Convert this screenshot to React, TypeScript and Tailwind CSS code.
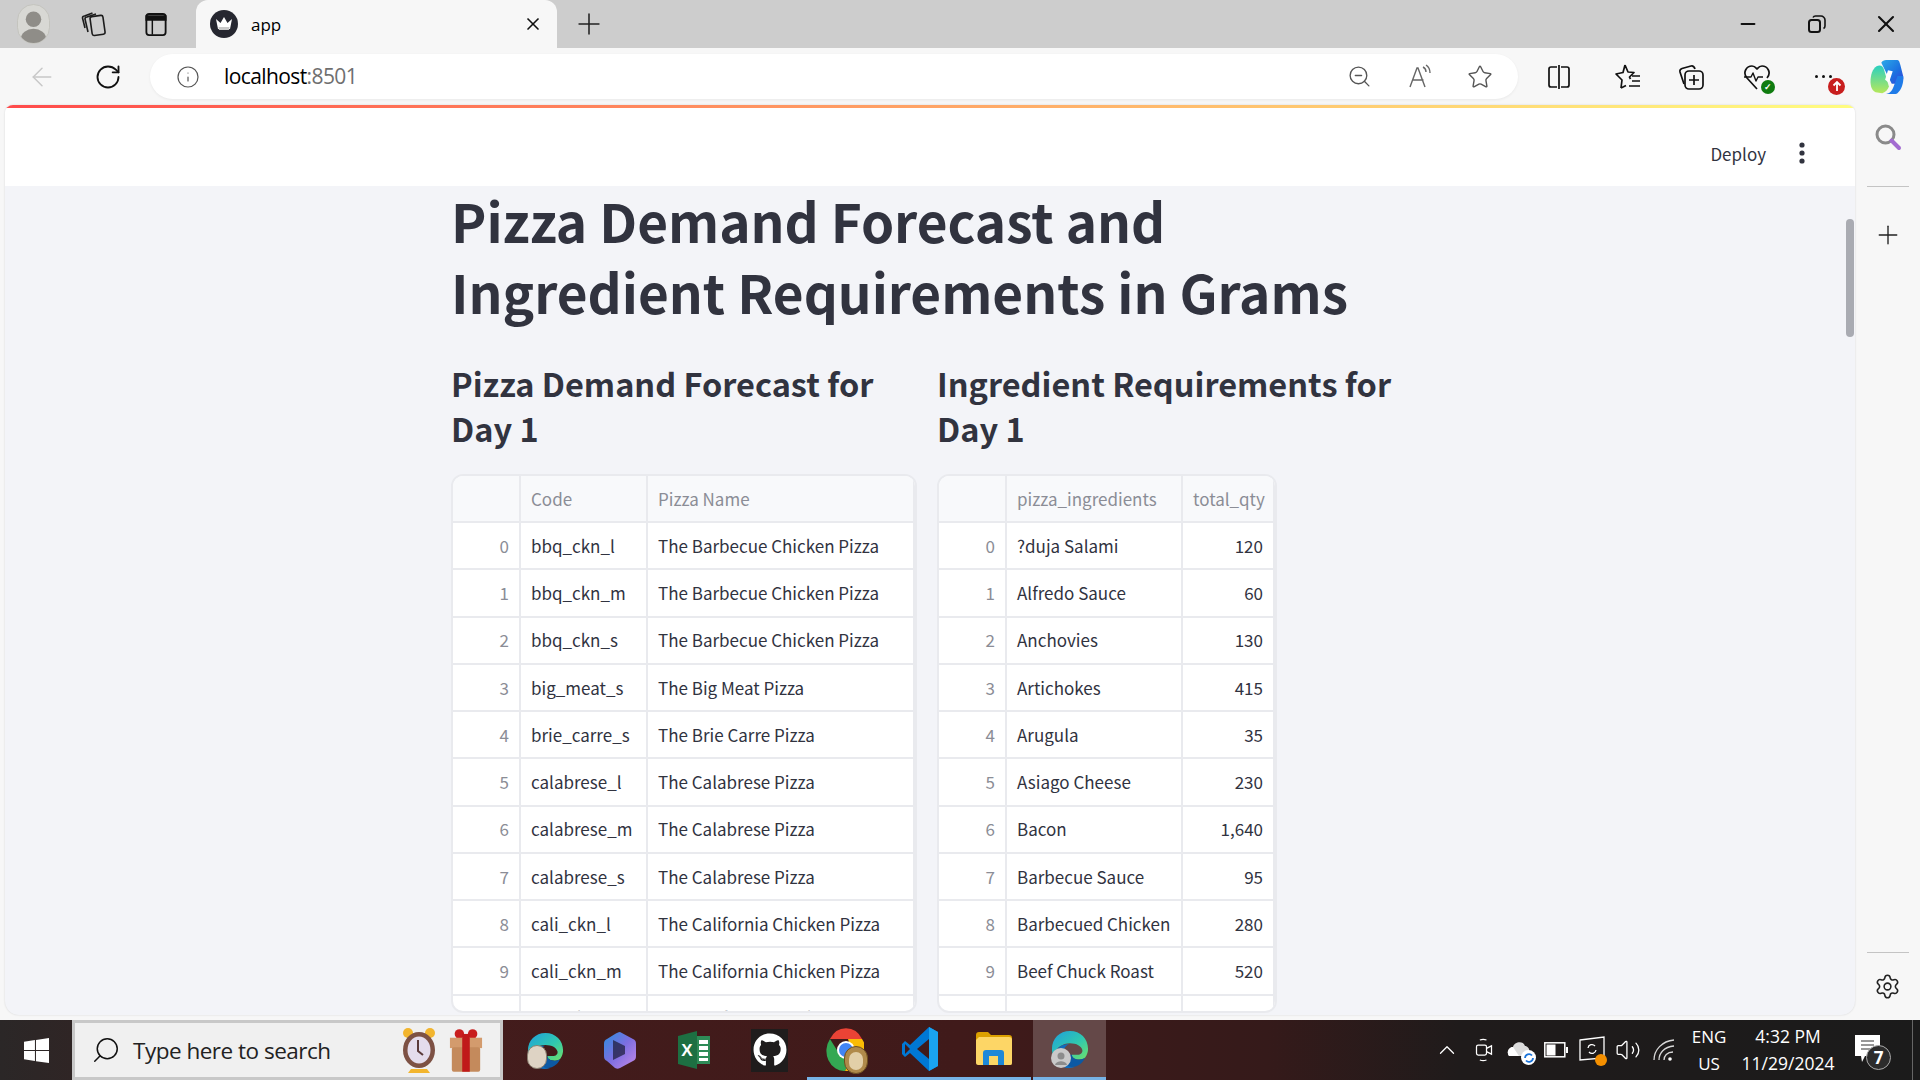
import React from "react";
import { ArrowLeft, RotateCw, Info, ZoomOut, Star, Plus, X, Minus, Settings, Search, ChevronUp, Volume2 } from "lucide-react";
import { FaGithub } from "react-icons/fa";

const codeRows = [
  ["bbq_ckn_l", "The Barbecue Chicken Pizza"],
  ["bbq_ckn_m", "The Barbecue Chicken Pizza"],
  ["bbq_ckn_s", "The Barbecue Chicken Pizza"],
  ["big_meat_s", "The Big Meat Pizza"],
  ["brie_carre_s", "The Brie Carre Pizza"],
  ["calabrese_l", "The Calabrese Pizza"],
  ["calabrese_m", "The Calabrese Pizza"],
  ["calabrese_s", "The Calabrese Pizza"],
  ["cali_ckn_l", "The California Chicken Pizza"],
  ["cali_ckn_m", "The California Chicken Pizza"],
  ["cali_ckn_s", "The California Chicken Pizza"],
];
const ingRows = [
  ["?duja Salami", "120"],
  ["Alfredo Sauce", "60"],
  ["Anchovies", "130"],
  ["Artichokes", "415"],
  ["Arugula", "35"],
  ["Asiago Cheese", "230"],
  ["Bacon", "1,640"],
  ["Barbecue Sauce", "95"],
  ["Barbecued Chicken", "280"],
  ["Beef Chuck Roast", "520"],
  ["Blue Cheese", "90"],
];

function Table({ cols, heads, rows, width, alignLast }: { cols: number[]; heads: string[]; rows: string[][]; width: string; alignLast?: boolean }) {
  const cell = "border-r-2 border-b-2 border-[#e9eaee] px-[10px] flex items-center overflow-hidden whitespace-nowrap shrink-0";
  return (
    <div className={`${width} h-[539px] overflow-hidden rounded-[12px] border-2 border-[#e9eaee] bg-white text-[17px] text-[#31333f]`}>
      <div className="flex h-[47px] bg-[#f8f9fb] text-[#8b8d96]">
        <div className={cell} style={{ width: cols[0] }} />
        <div className={cell} style={{ width: cols[1] }}>{heads[0]}</div>
        <div className={`${cell} border-r-0`} style={{ width: cols[2] }}>{heads[1]}</div>
      </div>
      {rows.map((r, i) => (
        <div key={i} className="flex h-[47.25px]">
          <div className={`${cell} justify-end text-[#8b8d96]`} style={{ width: cols[0] }}>{i}</div>
          <div className={cell} style={{ width: cols[1] }}>{r[0]}</div>
          <div className={`${cell} border-r-0 ${alignLast ? "justify-end" : ""}`} style={{ width: cols[2] }}>{r[1]}</div>
        </div>
      ))}
    </div>
  );
}

function Slot({ w, children, className = "" }: { w: string; children?: React.ReactNode; className?: string }) {
  return <div className={`${w} h-full flex items-center justify-center shrink-0 ${className}`}>{children}</div>;
}

function Edge({ id, size = 40, badge }: { id: string; size?: number; badge?: "photo" | "gray" }) {
  return (
    <div className="relative" style={{ width: size, height: size }}>
      <svg viewBox="0 0 40 40" width={size} height={size}>
        <defs>
          <linearGradient id={id} x1="0" y1="0" x2="1" y2="1">
            <stop offset="0" stopColor="#1f9fdc" />
            <stop offset="0.55" stopColor="#2fc8b0" />
            <stop offset="1" stopColor="#6fe06a" />
          </linearGradient>
        </defs>
        <path d="M20 1C9 1 1 9 1 20c0 3 .5 5 1.500 7C5 19 12 14 20 14c7 0 12 3 13 7 .5 3-2 5-5 5h-6c0 3 3 5 8 5 3 0 5-1 6-2 2-3 3-6 3-9C39 9 31 1 20 1Z" fill={`url(#${id})`} />
        <path d="M2.500 27C5 19 12 14 19 15c-5 2-7 7-6 12 1 5 5 10 12 12-2 .7-4 1-6 1-7 0-14-5-16.500-13Z" fill="#0f6cbd" />
        <path d="M22 26c0 3 3 5 8 5 3 0 5-1 6-2-3 7-9 10-14 10-4 0-7-3-8-6-1-3-1-6 0-8 1 1 3 1 8 1Z" fill="#0c59a4" />
      </svg>
      {badge === "photo" && (
        <div className="absolute left-0 bottom-0 w-[20px] h-[24px] rounded-full bg-[#ded3c4] border border-[#8a7f70]" />
      )}
      {badge === "gray" && (
        <div className="absolute left-0 bottom-0 w-[20px] h-[20px] rounded-full bg-[#c9c9c9] flex items-center justify-center">
          <svg viewBox="0 0 20 20" width="20" height="20"><circle cx="10" cy="8" r="3.5" fill="#8c8c8c" /><path d="M4 17c1-5 11-5 12 0Z" fill="#8c8c8c" /></svg>
        </div>
      )}
    </div>
  );
}

function Copilot({ size = 38 }: { size?: number }) {
  return (
    <svg viewBox="0 0 40 40" width={size} height={size}>
      <defs>
        <linearGradient id="cp1" x1="0" y1="0" x2="1" y2="1">
          <stop offset="0" stopColor="#2aa9e8" />
          <stop offset="0.6" stopColor="#1c6fe0" />
          <stop offset="1" stopColor="#3a3fd8" />
        </linearGradient>
        <linearGradient id="cp2" x1="0" y1="0" x2="0" y2="1">
          <stop offset="0" stopColor="#2ad0c0" />
          <stop offset="1" stopColor="#b7e85a" />
        </linearGradient>
      </defs>
      <path d="M14 5c1-2 3-3 5-3h11c3 0 3 2 4 5l3 12c1 5-2 8-6 8h-6L14 5Z" fill="url(#cp1)" />
      <path d="M3 20C4 13 8 8 12 8c3 0 4 2 5 5l5 17c-1 3-3 6-7 7l-7-1C3 34 2 27 3 20Z" fill="url(#cp2)" />
      <path d="M17 38c6 0 8-3 10-8l4-11h6c1 7-2 15-6 18-1 1-3 1-4 1H17Z" fill="#1f7be8" />
      <path d="M21 13l5 1-4 12-4-3 3-10Z" fill="#ffffff" />
    </svg>
  );
}

export default function App() {
  return (
    <div className="w-[1920px] h-[1080px] overflow-hidden flex flex-col bg-[#f7f7f7] text-black font-['Open_Sans',sans-serif]">
      {/* tab strip */}
      <div className="h-[48px] flex shrink-0 bg-[#cdcdcd] items-center">
        <Slot w="w-[66px]">
          <div className="w-[33px] h-[40px] rounded-full bg-[#d8d8d4] border border-[#c4c4be] flex items-center justify-center overflow-hidden">
            <svg viewBox="0 0 32 40" width="32" height="40"><circle cx="16" cy="15" r="8" fill="#8f8d88" /><ellipse cx="16" cy="35" rx="13" ry="10" fill="#8f8d88" /></svg>
          </div>
        </Slot>
        <Slot w="w-[55px]">
          <svg viewBox="0 0 26 28" width="26" height="28" fill="none" stroke="#1c1c1c" strokeWidth="1.6" strokeLinejoin="round">
            <rect x="10" y="6" width="13" height="19" rx="2" transform="rotate(-8 16 15)" />
            <path d="M7 22 4 9c0-1 .5-2 2-2l9-3M4 18 1.500 8c0-1 .5-2 2-2l8-3" />
          </svg>
        </Slot>
        <Slot w="w-[70px]" className="mr-[5px]">
          <svg viewBox="0 0 24 26" width="22" height="25" fill="none" stroke="#111" strokeWidth="2">
            <rect x="1.500" y="1.500" width="21" height="23" rx="3" />
            <path d="M1.500 4h21v4h-21z" fill="#111" />
            <path d="M8 8v16" strokeWidth="1.6" />
          </svg>
        </Slot>
        <div className="w-[361px] h-full shrink-0 bg-[#f7f7f7] rounded-t-[12px] flex items-center pl-[14px] pr-[14px]">
          <div className="w-[28px] h-[28px] rounded-full bg-[#262730] flex items-center justify-center">
            <svg viewBox="0 0 20 16" width="20" height="16"><path d="M2 3l4.500 4L10 1l3.500 6L18 3l-2 10H4Z" fill="#fff" /><path d="M4.500 11h11l-.6 3H5Z" fill="#c8c8c8" /></svg>
          </div>
          <span className="ml-[13px] text-[17px] leading-none text-black">app</span>
          <X className="ml-auto" size={20} strokeWidth={2} color="#111" />
        </div>
        <Slot w="w-[64px]"><Plus size={34} strokeWidth={1.1} color="#222" /></Slot>
        <div className="flex-1" />
        <Slot w="w-[69px]"><Minus size={22} strokeWidth={2.2} color="#111" /></Slot>
        <Slot w="w-[70px]">
          <svg viewBox="0 0 20 20" width="20" height="20" fill="none" stroke="#111" strokeWidth="2"><rect x="2" y="6" width="11" height="12" rx="2.500" /><path d="M6 3.500c.5-1 1.500-1.500 2.500-1.500H14c2 0 4 2 4 4v6c0 1-.5 2-1.500 2.500" strokeWidth="1.600" /></svg>
        </Slot>
        <Slot w="w-[68px]"><X size={28} strokeWidth={1.8} color="#111" /></Slot>
      </div>

      {/* toolbar */}
      <div className="h-[57px] shrink-0 flex items-center">
        <Slot w="w-[84px]"><ArrowLeft size={30} strokeWidth={1.2} color="#c8c8c8" /></Slot>
        <Slot w="w-[48px]"><RotateCw size={28} strokeWidth={1.6} color="#111" /></Slot>
        <div className="ml-[18px] w-[1368px] h-[45px] shrink-0 bg-white rounded-full flex items-center shadow-[0_1px_3px_rgba(0,0,0,0.06)]">
          <Info className="ml-[26px]" size={24} strokeWidth={1.2} color="#555" />
          <span className="ml-[24px] text-[21px] leading-none tracking-[-0.6px] text-black">localhost<span className="text-[#6f6f6f]">:8501</span></span>
          <div className="flex-1" />
          <Slot w="w-[62px]"><ZoomOut size={25} strokeWidth={1.3} color="#555" /></Slot>
          <Slot w="w-[60px]">
            <svg viewBox="0 0 26 26" width="26" height="26" fill="none" stroke="#666" strokeWidth="1.400"><path d="M3 23 10 4h1l7 19M5.500 16h11" /><path d="M16 3c2 1 3 3 3 5M19 1c3 2 4 4 4 8" /></svg>
          </Slot>
          <Slot w="w-[60px]"><Star size={26} strokeWidth={1.3} color="#555" /></Slot>
          <div className="w-[8px]" />
        </div>
        <Slot w="w-[74px]" className="ml-[4px]">
          <svg viewBox="0 0 26 26" width="26" height="26" fill="none" stroke="#111" strokeWidth="1.700"><path d="M11 3H5a2 2 0 0 0-2 2v16a2 2 0 0 0 2 2h6M15 3h6a2 2 0 0 1 2 2v16a2 2 0 0 1-2 2h-6M13 1v24" /></svg>
        </Slot>
        <Slot w="w-[62px]">
          <svg viewBox="0 0 28 28" width="28" height="28" fill="none" stroke="#111" strokeWidth="1.700" strokeLinejoin="round"><path d="M12 2l3 7 6 .5-4.500 4.500 1 2M8 25l1-8-6-6 7-1.500L12 2M8 25l5-2.500" /><path d="M19 13h8M19 18h8M16 23h11" /></svg>
        </Slot>
        <Slot w="w-[66px]">
          <svg viewBox="0 0 28 28" width="28" height="28" fill="none" stroke="#111" strokeWidth="1.700"><rect x="8" y="8" width="18" height="18" rx="4" /><path d="M17 12v10M12 17h10" /><path d="M7 21 3 9c-.5-2 .5-3 2-3.500L14 3c2-.5 3 0 4 3" /></svg>
        </Slot>
        <Slot w="w-[66px]">
          <div className="relative w-[28px] h-[28px]">
            <svg viewBox="0 0 28 28" width="28" height="28" fill="none" stroke="#111" strokeWidth="1.700" strokeLinejoin="round"><path d="M14 26 4 15c-5-6 0-12 5-12 3 0 4 2 5 3 1-1 2-3 5-3 5 0 10 6 5 12" /><path d="M1 14h7l2-4 3 8 2-4h5" strokeWidth="1.400" /></svg>
            <div className="absolute right-[-4px] bottom-[-3px] w-[14px] h-[14px] rounded-full bg-[#107c10] flex items-center justify-center text-white text-[9px] leading-none font-bold">✓</div>
          </div>
        </Slot>
        <Slot w="w-[66px]">
          <div className="relative flex items-center justify-center gap-[4px] w-[28px] h-[28px]">
            <span className="w-[3px] h-[3px] rounded-full bg-[#111]" />
            <span className="w-[3px] h-[3px] rounded-full bg-[#111]" />
            <span className="w-[3px] h-[3px] rounded-full bg-[#111]" />
            <div className="absolute right-[-8px] bottom-[-4px] w-[17px] h-[17px] rounded-full bg-[#c81e1e] flex items-center justify-center">
              <svg viewBox="0 0 12 12" width="12" height="12" fill="none" stroke="#fff" strokeWidth="1.800"><path d="M6 11V2M2.500 5.500 6 2l3.500 3.500" /></svg>
            </div>
          </div>
        </Slot>
        <Slot w="w-[60px]" className="pl-[2px]"><Copilot /></Slot>
      </div>

      {/* middle */}
      <div className="h-[915px] shrink-0 flex pl-[5px]">
        <div className="relative w-[1850px] h-[910px] overflow-hidden rounded-b-[14px] rounded-t-[8px] bg-[#f3f4f8] shadow-[0_0_2px_rgba(0,0,0,0.15)] flex flex-col">
          <div className="h-[3px] shrink-0 bg-[linear-gradient(90deg,#ff4b4b,#fffd80)]" />
          <div className="h-[78px] shrink-0 bg-white flex items-center justify-end pr-[50px] pt-[12px] text-[#31333f] font-['Noto_Sans_CJK_SC',sans-serif]">
            <span className="text-[17px] leading-none">Deploy</span>
            <svg className="ml-[33px]" viewBox="0 0 6 24" width="6" height="24" fill="#31333f"><circle cx="3" cy="4" r="2.600" /><circle cx="3" cy="12" r="2.600" /><circle cx="3" cy="20" r="2.600" /></svg>
          </div>
          <div className="flex-1 overflow-hidden pl-[446px] text-[#31333f] font-['Noto_Sans_CJK_SC',sans-serif]">
            <h1 className="-mt-[2px] h-[142px] text-[53.1px] leading-[71px] font-bold text-[#31333f]">Pizza Demand Forecast and<br />Ingredient Requirements in Grams</h1>
            <div className="flex gap-[22px] mt-[34px]">
              <div className="w-[464px] shrink-0">
                <h2 className="h-[92px] text-[32.5px] leading-[45px] font-semibold">Pizza Demand Forecast for Day 1</h2>
                <div className="mt-[22px]">
                  <Table width="w-[466px]" cols={[68, 127, 267]} heads={["Code", "Pizza Name"]} rows={codeRows} />
                </div>
              </div>
              <div className="w-[464px] shrink-0">
                <h2 className="h-[92px] text-[32.5px] leading-[45px] font-semibold">Ingredient Requirements for Day 1</h2>
                <div className="mt-[22px]">
                  <Table width="w-[340px]" cols={[68, 176, 92]} heads={["pizza_ingredients", "total_qty"]} rows={ingRows} alignLast />
                </div>
              </div>
            </div>
          </div>
          <div className="absolute right-[1px] top-[114px] w-[8px] h-[118px] rounded-full bg-[#a9abb2]" />
        </div>
        <div className="flex-1 flex flex-col items-center">
          <Slot w="w-full" className="!h-[64px]">
            <svg viewBox="0 0 28 28" width="28" height="28" fill="none"><circle cx="11.500" cy="11.500" r="8.500" stroke="#8a8a8a" strokeWidth="3" /><path d="M17.500 17.500 25 25" stroke="#a36bd1" strokeWidth="4" strokeLinecap="round" /></svg>
          </Slot>
          <div className="w-[42px] h-[1px] bg-[#c4c4c4] mt-[17px]" />
          <Slot w="w-full" className="!h-[95px]"><Plus size={30} strokeWidth={1.1} color="#222" /></Slot>
          <div className="flex-1" />
          <div className="w-[42px] h-[1px] bg-[#c4c4c4]" />
          <Slot w="w-full" className="!h-[67px]"><Settings size={27} strokeWidth={1.4} color="#222" /></Slot>
        </div>
      </div>

      {/* taskbar */}
      <div className="h-[60px] shrink-0 flex items-center bg-[linear-gradient(90deg,#2b2727_0%,#431c1c_22%,#401a1a_50%,#351a1a_66%,#1f1b1b_76%,#1b1b1b_100%)] text-white">
        <Slot w="w-[72px]">
          <svg viewBox="0 0 24 24" width="25" height="25" fill="#fff"><path d="M0 3.500 10.500 2v9.500H0ZM11.500 1.800 24 0v11.500H11.500ZM0 12.500h10.500V22L0 20.500ZM11.500 12.500H24V24l-12.500-1.800Z" /></svg>
        </Slot>
        <div className="w-[431px] h-full shrink-0 bg-[#f0f0f0] border-[3px] border-[#c8c8c8] flex items-center text-[#1a1a1a]">
          <Search className="ml-[16px] -scale-x-100" size={30} strokeWidth={1.2} color="#111" />
          <span className="ml-[12px] mt-[3px] text-[22.5px] leading-none tracking-[-0.5px] text-[#222]">Type here to search</span>
          <div className="flex-1" />
          <svg viewBox="0 0 36 46" width="36" height="46">
            <circle cx="7" cy="6" r="5" fill="#f2b52e" /><circle cx="29" cy="6" r="5" fill="#f2b52e" />
            <path d="M10 42h16l3 4H7Z" fill="#f2b52e" />
            <ellipse cx="18" cy="23" rx="16" ry="18" fill="#7d5144" />
            <ellipse cx="18" cy="23" rx="11.500" ry="13.500" fill="#e4dcec" />
            <path d="M17 13v11l5 4" stroke="#5a3a3a" strokeWidth="2" fill="none" />
          </svg>
          <svg className="ml-[12px] mr-[17px]" viewBox="0 0 36 46" width="34" height="46">
            <circle cx="11" cy="6" r="5" fill="#c81e1e" /><circle cx="25" cy="6" r="5" fill="#c81e1e" />
            <rect x="1" y="10" width="34" height="11" fill="#d39b6d" />
            <rect x="3" y="20" width="30" height="26" rx="2" fill="#c48a5c" />
            <rect x="14" y="6" width="8" height="40" fill="#c01a1a" />
          </svg>
        </div>
        <Slot w="w-[78px]" className="ml-[3px]"><Edge id="eg1" size={37} badge="photo" /></Slot>
        <Slot w="w-[72px]">
          <svg viewBox="0 0 32 38" width="32" height="38">
            <defs><linearGradient id="m365" x1="0" y1="0" x2="1" y2="1"><stop offset="0" stopColor="#2a8fe0" /><stop offset="0.5" stopColor="#7d6ee0" /><stop offset="1" stopColor="#c58ae8" /></linearGradient></defs>
            <path d="M16 1 29 8c2 1 3 2 3 5v12c0 3-1 4-3 5l-13 7c-2 1-3 1-5 0L3 30c-2-1-3-2-3-5V13c0-3 1-4 3-5l8-5c2-1 3-2 5-2Z" fill="url(#m365)" />
            <path d="M9 9l12 6 0 8-12 6Z" fill="#202040" opacity=".75" />
          </svg>
        </Slot>
        <Slot w="w-[76px]">
          <svg viewBox="0 0 32 38" width="32" height="38">
            <path d="M0 5 19 0v38L0 33Z" fill="#1d6f42" /><rect x="19" y="5" width="13" height="28" fill="#2e8b57" />
            <path d="M21 9h9v4h-9ZM21 15h9v4h-9ZM21 21h9v4h-9ZM21 27h9v3h-9Z" fill="#fff" />
            <text x="9" y="25" fontSize="17" fill="#fff" fontWeight="700" textAnchor="middle" fontFamily="Liberation Sans, sans-serif">X</text>
          </svg>
        </Slot>
        <Slot w="w-[75px]">
          <div className="w-[37px] h-[43px] bg-[#1f1c1c] flex items-center justify-center"><FaGithub size={34} color="#fff" /></div>
        </Slot>
        <Slot w="w-[75px]" className="border-b-[3px] border-[#76b3e6]">
          <div className="relative w-[38px] h-[44px]">
            <svg viewBox="0 0 38 44" width="38" height="44">
              <path d="M4 12A18 20 0 0 1 36 12H19Z" fill="#ea4335" />
              <path d="M4 12A18 20 0 0 0 19 44l8-16H14Z" fill="#34a853" />
              <path d="M36 12H22l5 16-8 16A18 20 0 0 0 36 12Z" fill="#fbbc05" />
              <circle cx="20" cy="23" r="9" fill="#fff" /><circle cx="20" cy="23" r="7" fill="#4285f4" />
            </svg>
            <div className="absolute right-[-4px] bottom-[-3px] w-[24px] h-[28px] rounded-full bg-[#b08a4a] border border-[#6e4f1f]">
              <div className="mx-auto mt-[5px] w-[14px] h-[18px] rounded-full bg-[#e2cfa8]" />
            </div>
          </div>
        </Slot>
        <Slot w="w-[75px]" className="border-b-[3px] border-[#76b3e6]">
          <svg viewBox="0 0 36 44" width="36" height="44">
            <path d="M27 0 36 5v34l-9 5L8 26l-5 4-3-3V17l3-3 5 4Z" fill="#0078d4" />
            <path d="M27 0 36 5v34l-9 5Z" fill="#1aa3f0" />
            <path d="M27 12 15 22l12 10Z" fill="#3f1a1a" />
            <path d="M3 17l5 5-5 5Z" fill="#3f1a1a" />
          </svg>
        </Slot>
        <Slot w="w-[74px]" className="border-b-[3px] border-[#76b3e6]">
          <svg viewBox="0 0 36 34" width="36" height="34">
            <path d="M0 3c0-2 1-3 3-3h9l3 3h18c2 0 3 1 3 3v4H0Z" fill="#dca000" />
            <path d="M3 5h30c2 0 3 1 3 3v23c0 2-1 2-3 2H2c-1 0-2-1-2-2V8Z" fill="#fdd666" />
            <path d="M7 33V21c0-2 1-3 3-3h15c2 0 3 1 3 3v12h-6v-9h-9v9Z" fill="#1e88d8" />
          </svg>
        </Slot>
        <Slot w="w-[73px]" className="bg-[#644848] ml-[2px] border-b-[3px] border-[#76b3e6]">
          <Edge id="eg2" size={38} badge="gray" />
        </Slot>
        <div className="flex-1" />
        <Slot w="w-[36px]"><ChevronUp size={26} strokeWidth={1.2} color="#fff" /></Slot>
        <Slot w="w-[37px]">
          <svg viewBox="0 0 24 30" width="20" height="28" fill="none" stroke="#fff" strokeWidth="1.500"><rect x="3" y="9" width="12" height="12" rx="2" /><path d="M15 13l6-3v10l-6-3" /><path d="M7 3a12 12 0 0 1 8 0M7 27a12 12 0 0 0 8 0" /></svg>
        </Slot>
        <Slot w="w-[36px]">
          <div className="relative w-[26px] h-[26px]">
            <svg viewBox="0 0 26 22" width="26" height="22"><path d="M2 19c-3-4 0-9 4-9 1-5 10-7 12-1 3 0 6 4 4 10Z" fill="#dcdcdc" /><path d="M2 19c-3-4 0-9 4-9l6 9Z" fill="#fff" /></svg>
            <div className="absolute right-[-3px] bottom-[-2px] w-[15px] h-[15px] rounded-full bg-white flex items-center justify-center">
              <svg viewBox="0 0 12 12" width="12" height="12" fill="none" stroke="#1a73d9" strokeWidth="1.800"><path d="M2 6a4 4 0 0 1 7-2.500M10 6a4 4 0 0 1-7 2.500" /></svg>
            </div>
          </div>
        </Slot>
        <Slot w="w-[36px]">
          <svg viewBox="0 0 24 16" width="24" height="16" fill="none"><rect x=".8" y=".8" width="20" height="14" stroke="#fff" strokeWidth="1.500" /><rect x="2.500" y="2.500" width="9" height="11" fill="#fff" /><rect x="22" y="5" width="2" height="6" fill="#fff" /></svg>
        </Slot>
        <Slot w="w-[36px]">
          <div className="relative w-[26px] h-[28px]">
            <svg viewBox="0 0 26 28" width="26" height="28" fill="none" stroke="#fff" strokeWidth="1.300"><path d="M1 4 25 1v21L1 24Z" /><path d="M9 12a4 4 0 0 1 7-2M17 14a4 4 0 0 1-7 2" /></svg>
            <div className="absolute right-[-2px] bottom-[-2px] w-[12px] h-[12px] rounded-full bg-[#f59000]" />
          </div>
        </Slot>
        <Slot w="w-[36px]"><Volume2 size={26} strokeWidth={1.2} color="#fff" /></Slot>
        <Slot w="w-[36px]">
          <svg viewBox="0 0 24 24" width="24" height="24" fill="none" stroke="#d8d8d8" strokeWidth="1.300"><path d="M2 22C2 12 10 3 22 2M7 22c0-7 5-13 15-14M12 22c0-4 3-8 9-8" /><circle cx="18" cy="21" r="1.800" fill="#fff" stroke="none" /></svg>
        </Slot>
        <div className="w-[54px] flex flex-col items-center text-[17px] leading-[27px] mt-[-1px]">
          <span>ENG</span><span>US</span>
        </div>
        <div className="w-[102px] flex flex-col items-center text-[17.5px] leading-[27px] mt-[-1px] ml-[1px]">
          <span>4:32 PM</span><span className="whitespace-nowrap">11/29/2024</span>
        </div>
        <Slot w="w-[50px]" className="ml-[6px]">
          <div className="relative w-[30px] h-[30px]">
            <svg viewBox="0 0 26 28" width="26" height="28"><path d="M0 0h25v21H10l-3 6-1-6H0Z" fill="#fff" /><path d="M6 6h13M6 10h13M6 14h9" stroke="#333" strokeWidth="1.200" /></svg>
            <div className="absolute right-[-6px] bottom-[-5px] w-[25px] h-[25px] rounded-full bg-[#2c2c2c] border border-[#aaa] flex items-center justify-center text-[17px] font-bold leading-none">7</div>
          </div>
        </Slot>
        <div className="ml-[17px] mr-[7px] w-[1px] h-full bg-[#666]" />
      </div>
    </div>
  );
}
